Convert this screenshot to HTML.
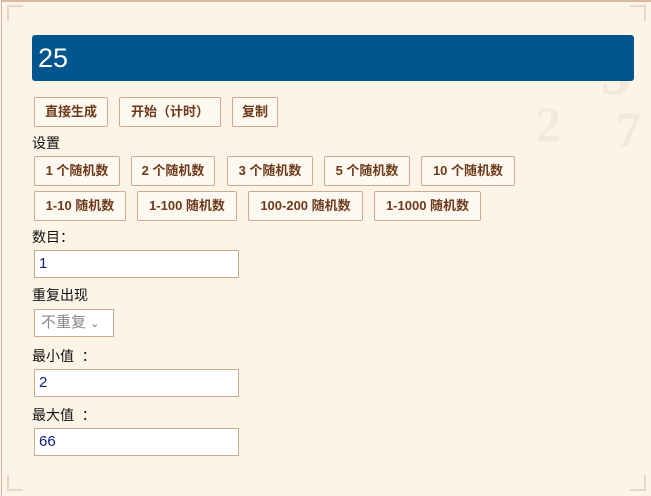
<!DOCTYPE html>
<html><head><meta charset="utf-8"><style>
*{box-sizing:border-box;margin:0;padding:0}
body{width:651px;height:496px;overflow:hidden;background:#fcf4e6;font-family:"Liberation Sans","Noto Sans CJK SC",sans-serif;position:relative}
.frame{position:absolute;left:1px;top:0;width:650px;height:496px;border-left:1px solid #d3b4a0;border-top:2px solid #d9b9a3}
.a{position:absolute}
.res{left:32px;top:35px;width:602px;height:46px;background:#03558f;border-radius:3px;color:#fff;font-size:27px;line-height:46px;padding-left:6px}
.b{position:absolute;height:30px;background:#fdf8f0;border:1px solid #d0a890;border-radius:2px;color:#6e3a1c;font-weight:bold;font-size:13px;line-height:28px;text-align:center}
.l{position:absolute;left:32px;font-size:14px;color:#111}
.in{position:absolute;left:34px;width:205px;height:28px;background:#fff;border:1px solid #d0a890;font-size:15px;line-height:26px;padding-left:4px;color:#102080}
.bg{position:absolute;font-size:60px;color:#f3e9da;font-family:"Liberation Serif",serif;font-weight:bold}
.c{position:absolute;width:16px;height:16px;border:2px solid #e8d6c6}
</style></head><body>
<div class="frame"></div>
<div class="bg" style="right:20px;top:40px">3</div>
<div class="bg" style="right:90px;top:95px;font-size:50px">2</div>
<div class="bg" style="right:10px;top:100px;font-size:50px">7</div>
<div class="c" style="left:7px;top:5px;border-right:none;border-bottom:none"></div>
<div class="c" style="right:5px;top:5px;border-left:none;border-bottom:none"></div>
<div class="c" style="left:7px;bottom:5px;border-right:none;border-top:none"></div>
<div class="c" style="right:5px;bottom:5px;border-left:none;border-top:none"></div>
<div class="a res">25</div>
<div class="b" style="left:34px;top:97px;width:74px">直接生成</div>
<div class="b" style="left:119px;top:97px;width:102px">开始（计时）</div>
<div class="b" style="left:232px;top:97px;width:46px">复制</div>
<div class="l" style="top:133px">设置</div>
<div class="b" style="left:34px;top:156px;width:86px">1 个随机数</div>
<div class="b" style="left:131px;top:156px;width:84px">2 个随机数</div>
<div class="b" style="left:227px;top:156px;width:86px">3 个随机数</div>
<div class="b" style="left:324px;top:156px;width:86px">5 个随机数</div>
<div class="b" style="left:421px;top:156px;width:94px">10 个随机数</div>
<div class="b" style="left:34px;top:191px;width:92px">1-10 随机数</div>
<div class="b" style="left:137px;top:191px;width:100px">1-100 随机数</div>
<div class="b" style="left:248px;top:191px;width:115px">100-200 随机数</div>
<div class="b" style="left:374px;top:191px;width:107px">1-1000 随机数</div>
<div class="l" style="top:227px">数目：</div>
<div class="in" style="top:250px">1</div>
<div class="l" style="top:285px">重复出现</div>
<div class="in" style="top:309px;width:80px;color:#888;padding-left:6px">不重复 <span style="font-size:11px;color:#777">⌄</span></div>
<div class="l" style="top:346px">最小值 &nbsp;：</div>
<div class="in" style="top:369px">2</div>
<div class="l" style="top:405px">最大值 &nbsp;：</div>
<div class="in" style="top:428px">66</div>
</body></html>
